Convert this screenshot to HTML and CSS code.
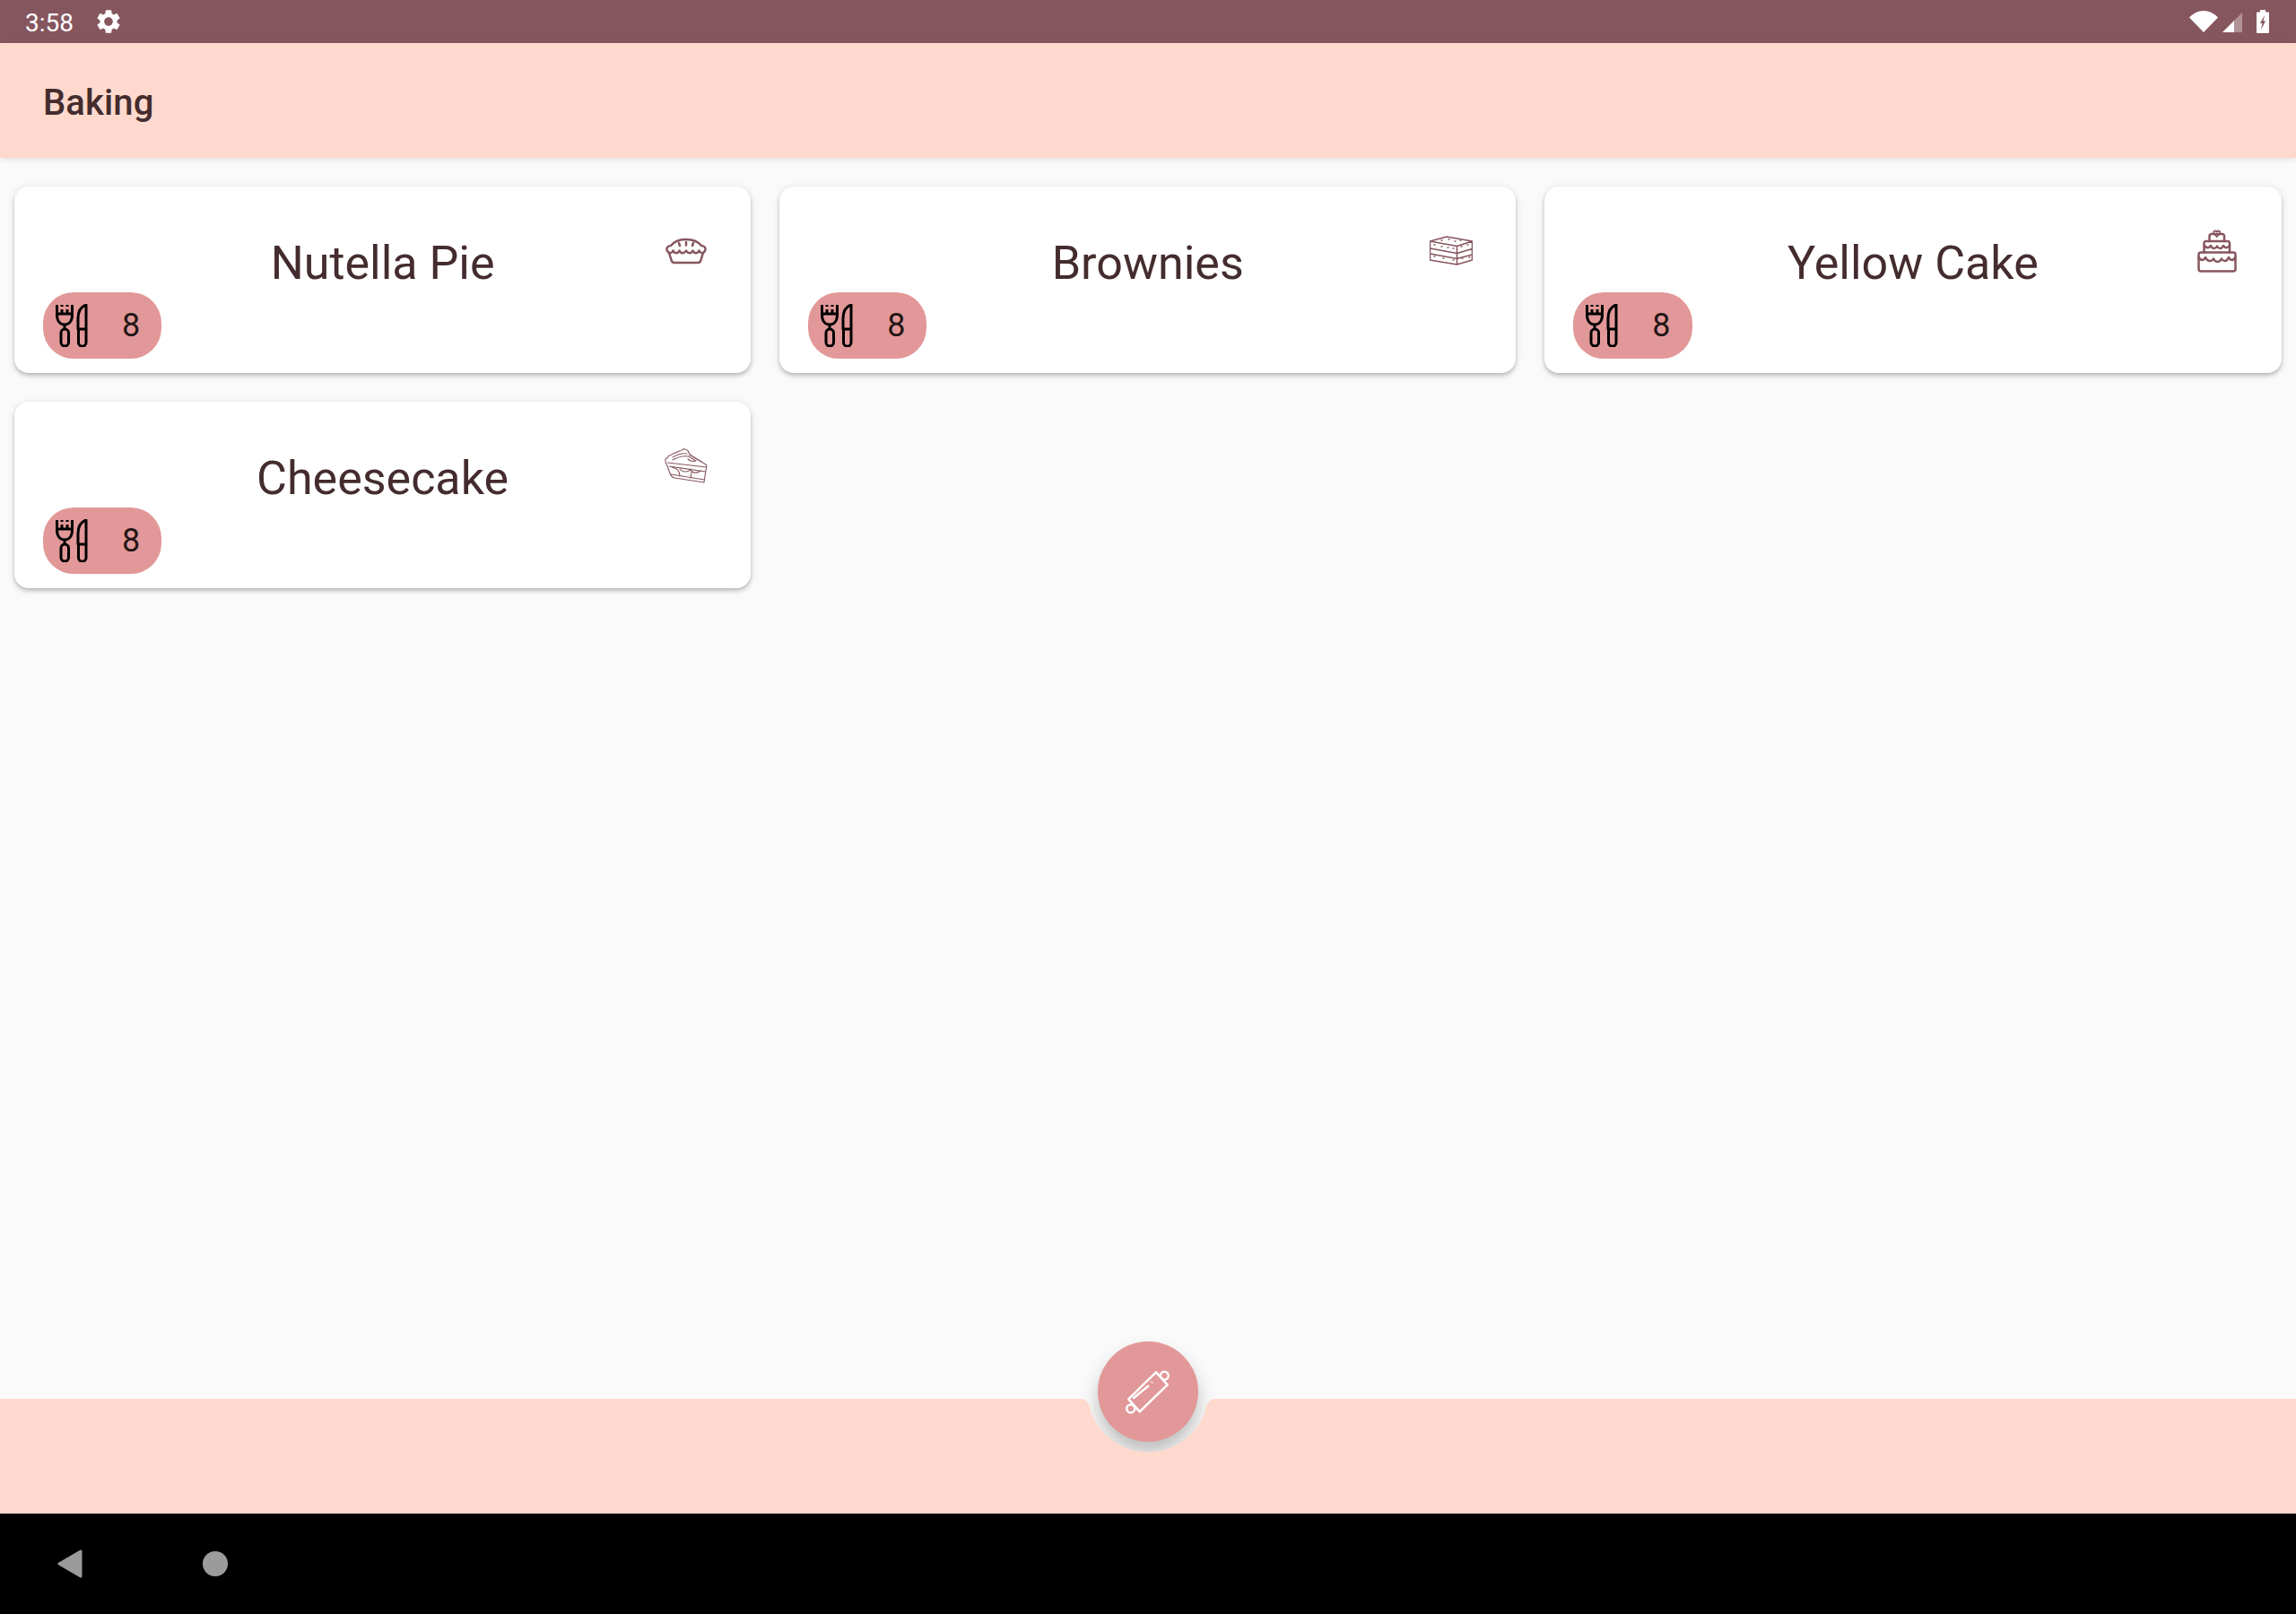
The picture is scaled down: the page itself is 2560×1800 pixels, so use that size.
FILE: index.html
```html
<!DOCTYPE html>
<html lang="en">
<head>
  <meta charset="UTF-8">
  <title>Baking</title>
  <link rel="stylesheet" href="styles.css">
</head>
<body>

<svg class="defs" width="0" height="0">
  <symbol id="cutlery" viewBox="0 0 48 48">
    <path d="M7.500 1V12C7.500 19 11 23 16 23C21 23 24.500 19 24.500 12V1M7.500 11H24.500M13 1V3M13 6V11M19 1V3M19 6V11M16 23V28"/>
    <rect x="12" y="28" width="8.500" height="19" rx="4.200"/>
    <path d="M40 28V1C34 3 31 9 31 16V28ZM31.500 28V43A4.200 4.200 0 0 0 40 43V28"/>
  </symbol>
</svg>

<div class="status-bar">
  <span class="clock">3:58</span>
  <svg class="gear" viewBox="0 0 24 24"><path d="M19.14 12.94c.04-.3.06-.61.06-.94 0-.32-.02-.64-.07-.94l2.03-1.58c.18-.14.23-.41.12-.61l-1.92-3.32c-.12-.22-.37-.29-.59-.22l-2.39.96c-.5-.38-1.03-.7-1.62-.94l-.36-2.54c-.04-.24-.24-.41-.48-.41h-3.84c-.24 0-.43.17-.47.41l-.36 2.54c-.59.24-1.13.57-1.62.94l-2.39-.96c-.22-.08-.47 0-.59.22L2.74 8.87c-.12.21-.08.47.12.61l2.03 1.58c-.05.3-.09.63-.09.94s.02.64.07.94l-2.03 1.58c-.18.14-.23.41-.12.61l1.92 3.32c.12.22.37.29.59.22l2.39-.96c.5.38 1.03.7 1.62.94l.36 2.54c.05.24.24.41.48.41h3.84c.24 0 .44-.17.47-.41l.36-2.54c.59-.24 1.13-.56 1.62-.94l2.39.96c.22.08.47 0 .59-.22l1.92-3.32c.12-.22.07-.47-.12-.61l-2.01-1.58zM12 15.6c-1.98 0-3.6-1.62-3.6-3.6s1.62-3.6 3.6-3.6 3.6 1.62 3.6 3.6-1.62 3.6-3.6 3.6z"/></svg>
  <div class="status-icons">
    <svg class="wifi" viewBox="0 0 32 24"><path d="M0 7.500C4 3 10 0 16 0C22 0 28 3 32 7.500L16 24Z"/></svg>
    <svg class="cell" viewBox="0 0 22 22"><path d="M0 22L13 9V22Z"/><path class="cell-dim" d="M13 9L22 0V22H13Z"/></svg>
    <svg class="battery" viewBox="0 0 14 26"><path fill-rule="evenodd" d="M4 0H10V2.500H13A1 1 0 0 1 14 3.500V25A1 1 0 0 1 13 26H1A1 1 0 0 1 0 25V3.500A1 1 0 0 1 1 2.500H4ZM9 6L4 15H6.500L5 22L10 12.500H7.500Z"/></svg>
  </div>
</div>

<header class="app-bar">Baking</header>

<main class="recipes">

  <div class="card">
    <h2 class="card-title">Nutella Pie</h2>
    <svg class="card-icon thick" viewBox="0 0 48 48">
      <path d="M3.500 24.500C1 21 3.500 18 7 18C11 13 18 11 24 11C30 11 37 13 41 18C44.500 18 47 21 44.500 24.500C43 27 40 27 38.500 23.500C37 27 33 27 31.500 23.500C30 27 26 27 24 23.500C22 27 18 27 16.500 23.500C15 27 11 27 9.500 23.500C8 27 5 27 3.500 24.500Z"/>
      <path d="M5.500 27.500L7.500 34C8 36 9 37 11 37H37C39 37 40 36 40.500 34L42.500 27.500"/>
      <path d="M16 15L17 18M24 14V17.500M32 15L31 18"/>
    </svg>
    <div class="chip">
      <svg class="cutlery"><use href="#cutlery"/></svg>
      <span class="chip-count">8</span>
    </div>
  </div>

  <div class="card">
    <h2 class="card-title">Brownies</h2>
    <svg class="card-icon" viewBox="0 0 48 48">
      <path d="M0.500 13L19 8L47.500 13L30.500 18.500ZM0.500 13V34L30.500 39L47.500 34V13M30.500 18.500V39M0.500 21L30.500 26.500L47.500 21.500M0.500 27L30.500 32.500L47.500 28"/>
      <path class="dots" d="M5 17h1M13 19h1M20 20h1M26 21h1M13 12h1M21 11h1M28 13h1M34 12h1M35 19h1M42 17h1M5 30h1M15 32h1M26 34h1M36 32h1M44 31h1"/>
    </svg>
    <div class="chip">
      <svg class="cutlery"><use href="#cutlery"/></svg>
      <span class="chip-count">8</span>
    </div>
  </div>

  <div class="card">
    <h2 class="card-title">Yellow Cake</h2>
    <svg class="card-icon thick" viewBox="0 0 48 48">
      <path d="M6 25.500H42C43.500 25.500 44.500 26.500 44.500 28V44C44.500 45.500 43.500 46.500 42 46.500H6C4.500 46.500 3.500 45.500 3.500 44V28C3.500 26.500 4.500 25.500 6 25.500Z"/>
      <path d="M3.500 31C6 35 9 35 11 31C13 36 18 36 20 32.500C22 37 27 37 29 32.500C31 36 35 36 37 31C39 35 42 35 44.500 31"/>
      <path d="M9.500 25.500V15C9.500 14 10.500 13 11.500 13H36C37 13 38 14 38 15V25.500"/>
      <path d="M9.500 17.500C12 21 15 21 17 18C19 22 22 22 24 18.500C26 22 29 22 31 18C33 21 36 21 38 17.500"/>
      <path d="M15.500 13V7C15.500 6 16.500 5 17.500 5H30C31 5 32 6 32 7V13"/>
      <path class="heart" d="M23.700 8L20.500 4.500C19 2 22 0.500 23.700 2.500C25.500 0.500 28.500 2 27 4.500Z"/>
    </svg>
    <div class="chip">
      <svg class="cutlery"><use href="#cutlery"/></svg>
      <span class="chip-count">8</span>
    </div>
  </div>

  <div class="card">
    <h2 class="card-title">Cheesecake</h2>
    <svg class="card-icon thin" viewBox="0 0 48 48">
      <path d="M1 16C3 15 4 14 5 12C7 12 8 11 10 9.500C12 10 14 8 16 7C18 8 20 4 23 5C26 5 27 8 28 11L46 22C47 23 47 24 46.500 25.500L44 42L11 37C8 36 7 35 6 32L1.500 20C1 18 0.500 17 1 16Z"/>
      <path d="M3.500 20L46.500 25M5 24L45.500 30M7 33L44.500 39"/>
      <path d="M9 14C14 11 20 9 25 10M9 17C14 14 20 12 27 13L35 18C32 19 28 18 26 16M28 11L41 19"/>
      <path d="M8 25C14 26 17 29 17 35M17 27C20 31 27 31 29 27M29 28C31 32 37 32 40 29M30 30C30 33 29 36 29 37"/>
    </svg>
    <div class="chip">
      <svg class="cutlery"><use href="#cutlery"/></svg>
      <span class="chip-count">8</span>
    </div>
  </div>

</main>

<footer class="bottom-bar">
  <!-- notch cut out of the bar, fab shadow only shows inside it -->
  <svg class="notch" viewBox="0 0 200 170">
    <defs>
      <clipPath id="notchClip"><path d="M24 90C32 90 35 96 37 107A68 68 0 0 0 163 107C165 96 168 90 176 90V0H24Z"/></clipPath>
      <filter id="fabBlur" x="-40%" y="-40%" width="180%" height="180%"><feGaussianBlur stdDeviation="10"/></filter>
    </defs>
    <path class="notch-fill" d="M24 90C32 90 35 96 37 107A68 68 0 0 0 163 107C165 96 168 90 176 90V0H24Z"/>
    <g clip-path="url(#notchClip)">
      <circle class="notch-shadow" cx="100" cy="95" r="56" filter="url(#fabBlur)"/>
    </g>
  </svg>
  <button class="fab">
    <svg class="pin" viewBox="0 0 56 56">
      <circle cx="46.300" cy="10.300" r="4.500"/>
      <circle cx="8.700" cy="47" r="4.500"/>
      <path class="pin-body" d="M37 6.300L49.700 20.300L18.700 50.300L6.300 36.300Z"/>
      <path d="M11.300 35.700L29 21.300M32 18L32.800 17.300"/>
    </svg>
  </button>
</footer>

<nav class="nav-bar">
  <svg class="nav-back" viewBox="0 0 28 32"><path d="M26 2L2 16L26 30Z"/></svg>
  <span class="nav-home"></span>
</nav>

</body>
</html>
```

FILE: styles.css
```css
* {
  box-sizing: border-box;
}

body {
  margin: 0;
  height: 1800px;
  display: flex;
  flex-direction: column;
  background: #fafafa;
  font-family: Roboto, sans-serif;
  color: #442c2e;
  overflow: hidden;
}

.defs {
  position: absolute;
}

/* status bar */
.status-bar {
  height: 48px;
  flex: none;
  display: flex;
  align-items: center;
  padding: 0 30px 0 28px;
  background: #86565f;
  color: #fff;
  font-size: 28px;
}

.gear {
  width: 32px;
  height: 32px;
  margin: 0 0 1px 23px;
  fill: #fff;
}

.clock {
  padding-top: 2px;
}

.status-icons {
  margin-left: auto;
  display: flex;
  align-items: center;
}

.status-icons svg {
  fill: #fff;
}

.wifi {
  width: 32px;
  height: 24px;
}

.cell {
  width: 22px;
  height: 22px;
  margin: 2px 0 0 5px;
}

.cell-dim {
  opacity: 0.35;
}

.battery {
  width: 14px;
  height: 26px;
  margin-left: 16px;
}

/* app bar */
.app-bar {
  height: 128px;
  flex: none;
  display: flex;
  align-items: center;
  padding: 4px 48px 0;
  background: #ffd9cd;
  font-size: 40px;
  font-weight: 460;
  letter-spacing: 0.1px;
  box-shadow: 0 2px 6px rgba(0, 0, 0, 0.1);
  position: relative;
}

/* cards */
.recipes {
  flex: 1;
  display: grid;
  grid-template-columns: repeat(3, 1fr);
  grid-auto-rows: 208px;
  align-content: start;
  gap: 32px;
  padding: 32px 16.5px 32px 16px;
}

.card {
  display: grid;
  grid-template-columns: 1fr auto 1fr;
  grid-template-rows: 64px 74px;
  row-gap: 6px;
  padding: 48px 32px 16px;
  background: #fff;
  border-radius: 16px;
  box-shadow: 0 2px 4px -1px rgba(0, 0, 0, 0.18), 0 4px 5px rgba(0, 0, 0, 0.1), 0 1px 10px rgba(0, 0, 0, 0.1);
}

.card-title {
  grid-column: 2;
  grid-row: 1;
  margin: 10px 0 0;
  font-size: 52px;
  font-weight: 400;
  line-height: 56px;
  white-space: nowrap;
}

.card-icon {
  grid-column: 3;
  grid-row: 1;
  justify-self: end;
  width: 48px;
  height: 48px;
  margin-right: 16px;
  fill: none;
  stroke: #86565f;
  stroke-width: 1.5;
  stroke-linejoin: round;
  stroke-linecap: round;
}

.card-icon.thick {
  stroke-width: 2.5;
}

.card-icon.thin {
  stroke-width: 1.1;
}

.dots {
  stroke-width: 1.4;
}

.heart {
  stroke-width: 1.8;
}

.chip {
  grid-column: 1;
  grid-row: 2;
  justify-self: start;
  height: 74px;
  display: flex;
  align-items: center;
  padding: 0 24px 0 8px;
  background: #e29898;
  border-radius: 34px;
  color: rgba(0, 0, 0, 0.87);
}

.cutlery {
  width: 48px;
  height: 48px;
  fill: none;
  stroke: #000;
  stroke-width: 3;
  stroke-linejoin: round;
}

.chip-count {
  margin-left: 32px;
  font-size: 36px;
}

/* bottom bar */
.bottom-bar {
  height: 128px;
  flex: none;
  background: #ffd9cd;
  position: relative;
}

.notch {
  position: absolute;
  left: 1180px;
  top: -90px;
  width: 200px;
  height: 170px;
}

.notch-fill {
  fill: #fafafa;
}

.notch-shadow {
  fill: rgba(0, 0, 0, 0.24);
}

.fab {
  position: absolute;
  left: 1224px;
  top: -64px;
  width: 112px;
  height: 112px;
  padding: 0;
  border: none;
  border-radius: 50%;
  background: #e29898;
  display: flex;
  align-items: center;
  justify-content: center;
}

.pin {
  width: 56px;
  height: 56px;
  fill: none;
  stroke: #fff;
  stroke-width: 2.5;
  stroke-linejoin: round;
}

.pin-body {
  fill: #e29898;
}

/* nav bar */
.nav-bar {
  height: 112px;
  flex: none;
  display: flex;
  align-items: center;
  padding-left: 64px;
  background: #000;
}

.nav-back {
  width: 28px;
  height: 32px;
  fill: #9b9b9b;
  stroke: #9b9b9b;
  stroke-width: 3;
  stroke-linejoin: round;
}

.nav-home {
  width: 28px;
  height: 28px;
  margin-left: 134px;
  border-radius: 50%;
  background: #9b9b9b;
}
```
